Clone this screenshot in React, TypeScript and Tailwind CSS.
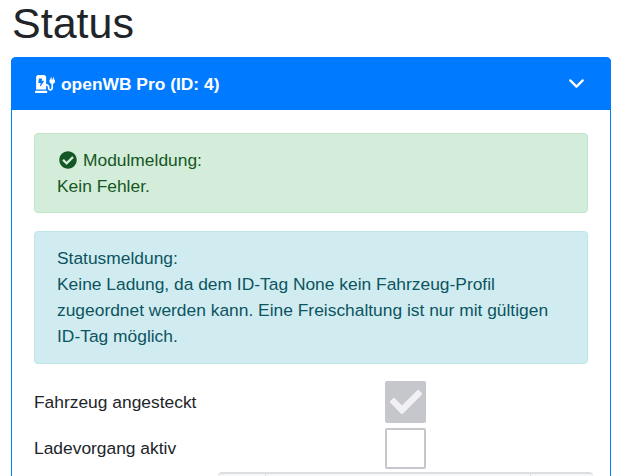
import { ChevronDown } from "lucide-react";
import { FaChargingStation, FaCheck, FaCheckCircle } from "react-icons/fa";

const sans = "font-['Liberation_Sans',Arial,sans-serif]";

export default function App() {
  return (
    <div className={`${sans} h-[476px] w-[618px] overflow-hidden bg-white text-[17.4px] leading-[26px] text-[#212529]`}>
      <h1 className="h-[57px] pl-[12px] text-[43px] leading-[46px] font-normal">Status</h1>

      {/* Card */}
      <div className="ml-[11px] w-[600px] rounded-t-[5px] border-x border-[#007bff]">
        <div className="-mx-px flex h-[53px] items-center justify-between rounded-t-[5px] bg-[#007bff] pr-[22px] pl-[24px] font-bold text-white">
          <div className="flex items-center gap-[6px]">
            <FaChargingStation size={20} />
            <span className="pt-[1px]">openWB Pro (ID: 4)</span>
          </div>
          <ChevronDown size={25} strokeWidth={2.2} />
        </div>

        <div className="px-[22px] pt-[23px]">
          {/* Module message */}
          <div className="h-[80px] rounded-[4px] border border-[#c3e6cb] bg-[#d4edda] px-[22px] pt-[13px] text-[#155724]">
            <div className="flex items-center gap-[6px] pl-[2px]">
              <FaCheckCircle size={18} />
              <span>Modulmeldung:</span>
            </div>
            <div>Kein Fehler.</div>
          </div>

          {/* Status message */}
          <div className="mt-[18px] h-[133px] rounded-[4px] border border-[#bee5eb] bg-[#d1ecf1] px-[22px] pt-[13px] text-[#0c5460]">
            <div>Statusmeldung:</div>
            <div>
              Keine Ladung, da dem ID-Tag None kein Fahrzeug-Profil zugeordnet werden kann. Eine Freischaltung ist nur mit gültigen ID-Tag möglich.
            </div>
          </div>

          {/* Status rows */}
          <div className="mt-[17px] flex h-[42px] items-center">
            <span className="w-[351px]">Fahrzeug angesteckt</span>
            <div className="flex h-[42px] w-[41px] items-center justify-center rounded-[2px] bg-[#c6c7cd] text-[#f1f1f5]">
              <FaCheck size={32} />
            </div>
          </div>
          <div className="mt-[4px] flex h-[42px] items-center">
            <span className="w-[351px]">Ladevorgang aktiv</span>
            <div className="h-[41px] w-[41px] rounded-[2px] border-2 border-[#c6c7cd] bg-white" />
          </div>

          {/* Partly visible table */}
          <div className="mt-[3px] ml-[184px] flex h-[20px] w-[375px] rounded-t-[4px] border-t-2 border-[#dcdfe1] bg-[#f5f6f7]">
            <div className="w-[48px] border-r border-[#dcdfe1]" />
            <div className="w-[265px] border-r border-[#dcdfe1]" />
          </div>
        </div>
      </div>
    </div>
  );
}
